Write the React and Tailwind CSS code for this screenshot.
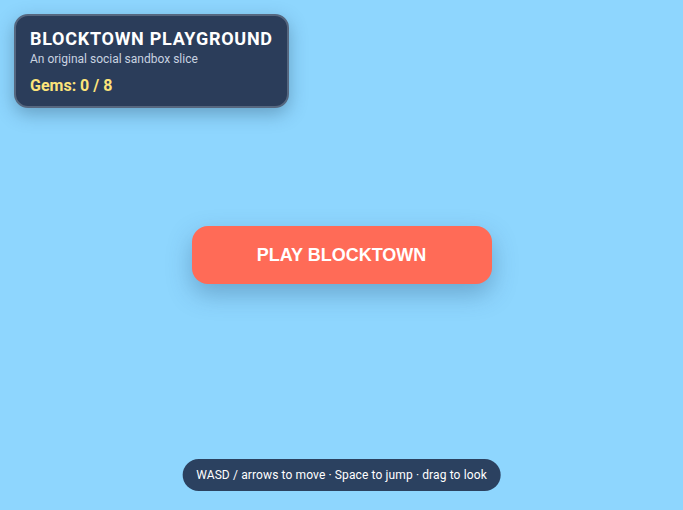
import React from 'react';

export default function App() {
  return (
    <div className="relative flex h-[510px] w-full items-center justify-center overflow-hidden bg-[#8ed6fe] font-['Roboto',sans-serif]">
      <div className="absolute left-[14px] top-[14px] w-[275px] rounded-[14px] border-2 border-[#56677f] bg-[#2b3d5a] px-[14px] pb-[10px] pt-[12px] shadow-[0_6px_18px_rgba(30,60,90,0.35)]">
        <h1 className="text-[18px] font-bold leading-[22px] tracking-[0.04em] text-white">BLOCKTOWN PLAYGROUND</h1>
        <p className="mt-[2px] text-[12px] leading-[15px] text-[#c9d3e0]">An original social sandbox slice</p>
        <p className="mt-[9px] text-[16px] font-bold leading-[20px] text-[#fde47a]">Gems: 0 / 8</p>
      </div>

      <button className="h-[58px] w-[300px] rounded-[16px] bg-[#ff6b57] font-['Liberation_Sans',Arial,sans-serif] text-[18px] font-bold text-white shadow-[0_10px_24px_rgba(40,80,120,0.35)]">
        PLAY BLOCKTOWN
      </button>

      <div className="absolute bottom-[19px] left-1/2 -translate-x-1/2 whitespace-nowrap rounded-full bg-[#2b4160] px-[14px] py-[7px] text-[12px] leading-[18px] tracking-[0.01em] text-white">
        WASD / arrows to move · Space to jump · drag to look
      </div>
    </div>
  );
}
